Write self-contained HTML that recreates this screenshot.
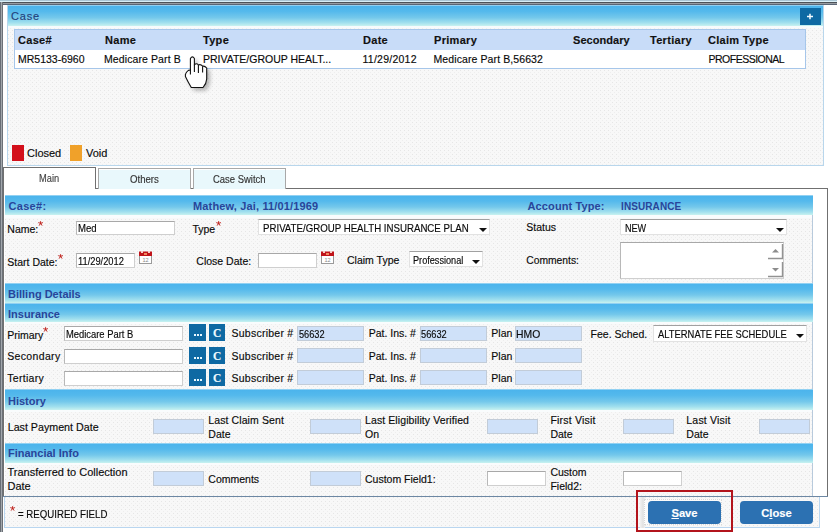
<!DOCTYPE html>
<html><head><meta charset="utf-8">
<style>
*{margin:0;padding:0;box-sizing:border-box}
html,body{width:837px;height:532px;overflow:hidden;background:#fff;font-family:"Liberation Sans",sans-serif;font-size:11px;color:#0a0a0a}
.a{position:absolute}
.t{position:absolute;white-space:nowrap;line-height:1;-webkit-text-stroke:0.15px currentColor}
.hb{position:absolute;background:linear-gradient(#c4e6f6 0px,#4cb4ec 1.2px,#54b9ec 30%,#74c8eb 60%,#a2e0ee 85%,#c8f2f0 100%)}
.ht{position:absolute;white-space:nowrap;line-height:1;font-weight:bold;color:#28459a;font-size:11px;letter-spacing:0px}
.inp{position:absolute;background:#fff;border:1px solid #cfcfcf;border-top-color:#a8a8a8;border-left-color:#b8b8b8}
.sel{position:absolute;background:#fff;border:1px solid #e2e2e2;border-top-color:#a0a0a0}
.blu{position:absolute;background:#cfe1f9;border:1px solid #c2ccd8}
.btn{position:absolute;background:#0e69a3;color:#fff;font-weight:bold;text-align:center;line-height:1}
.body{position:absolute;background-color:#f8f8f8;background-image:conic-gradient(at 1px 1px,rgba(0,0,0,0) 75%,#e6e6e6 0),conic-gradient(at 1px 1px,rgba(0,0,0,0) 75%,#eeeeee 0);background-size:4px 4px,4px 4px;background-position:0 0,2px 2px;box-shadow:inset -1px 0 #b8cadc}
.tex{background-color:#f8f8f8;background-image:conic-gradient(at 1px 1px,rgba(0,0,0,0) 75%,#e6e6e6 0),conic-gradient(at 1px 1px,rgba(0,0,0,0) 75%,#eeeeee 0);background-size:4px 4px,4px 4px;background-position:0 0,2px 2px}
.arr{position:absolute;width:0;height:0;border-left:4px solid transparent;border-right:4px solid transparent;border-top:4px solid #111}
</style></head><body>
<div class="a" style="left:0px;top:0px;width:837px;height:1px;background:#aac6d6"></div>
<div class="a" style="left:0px;top:1px;width:837px;height:1px;background:#d8eef6"></div>
<div class="a" style="left:0px;top:2px;width:837px;height:1px;background:#4c5258"></div>
<div class="a" style="left:0px;top:3px;width:837px;height:1px;background:#979ca2"></div>
<div class="a" style="left:0px;top:4px;width:837px;height:1px;background:#5a6676"></div>
<div class="a" style="left:0px;top:2px;width:1px;height:530px;background:#686e76"></div>
<div class="a" style="left:1px;top:2px;width:1px;height:530px;background:#a2a7ac"></div>
<div class="a" style="left:2px;top:2px;width:1px;height:530px;background:#6c7178"></div>
<div class="a tex" style="left:7px;top:5px;width:817px;height:161px;border:1px solid #b8d6ec"></div>
<div class="hb" style="left:8px;top:5px;width:815px;height:21px"></div>
<div class="a" style="left:8px;top:26px;width:815px;height:2px;background:#f6fbfd"></div>
<div class="t" style="left:11px;top:11px;font-size:11px;letter-spacing:0.8px;color:#22407c">Case</div>
<div class="btn" style="left:800px;top:8px;width:21px;height:17px"></div>
<svg class="a" style="left:806px;top:12px" width="9" height="9" viewBox="0 0 9 9"><path d="M4 1.8V7.2M1 4.5H7" stroke="#f4fbff" stroke-width="1.5"/></svg>
<div class="a" style="left:14px;top:29px;width:792px;height:40px;border:1px solid #a6c6ea;background:#fff"></div>
<div class="a" style="left:15px;top:30px;width:790px;height:20px;background:#c8dcf8"></div>
<div class="t" style="left:18px;top:35px;font-size:11px;letter-spacing:0.3px;font-weight:bold;color:#111">Case#</div>
<div class="t" style="left:105px;top:35px;font-size:11px;letter-spacing:0.3px;font-weight:bold;color:#111">Name</div>
<div class="t" style="left:203px;top:35px;font-size:11px;letter-spacing:0.3px;font-weight:bold;color:#111">Type</div>
<div class="t" style="left:363px;top:35px;font-size:11px;letter-spacing:0.3px;font-weight:bold;color:#111">Date</div>
<div class="t" style="left:434px;top:35px;font-size:11px;letter-spacing:0.3px;font-weight:bold;color:#111">Primary</div>
<div class="t" style="left:573px;top:35px;font-size:11px;letter-spacing:0.05px;font-weight:bold;color:#111">Secondary</div>
<div class="t" style="left:650px;top:35px;font-size:11px;letter-spacing:0.3px;font-weight:bold;color:#111">Tertiary</div>
<div class="t" style="left:708px;top:35px;font-size:11px;letter-spacing:0.3px;font-weight:bold;color:#111">Claim Type</div>
<div class="t" style="left:18px;top:54px;font-size:10.5px;letter-spacing:0px;">MR5133-6960</div>
<div class="t" style="left:104px;top:54px;font-size:10.5px;letter-spacing:0.1px;">Medicare Part B</div>
<div class="t" style="left:203px;top:54px;font-size:10.5px;letter-spacing:0px;">PRIVATE/GROUP HEALT...</div>
<div class="t" style="left:362.5px;top:54px;font-size:10.5px;letter-spacing:0.25px;">11/29/2012</div>
<div class="t" style="left:433.5px;top:54px;font-size:10.5px;letter-spacing:0.1px;">Medicare Part B,56632</div>
<div class="t" style="left:708.5px;top:54px;font-size:10.5px;letter-spacing:-0.5px;">PROFESSIONAL</div>
<div class="a" style="left:12px;top:145px;width:12px;height:16px;background:#d3101b"></div>
<div class="t" style="left:27px;top:148px;font-size:11px;letter-spacing:0px;">Closed</div>
<div class="a" style="left:70px;top:145px;width:12px;height:16px;background:#f0a12a"></div>
<div class="t" style="left:86px;top:148px;font-size:11px;letter-spacing:0px;">Void</div>
<div class="a" style="left:3px;top:188px;width:825px;height:309px;border:1px solid #707070;background:#fff"></div>
<div class="a" style="left:3px;top:167px;width:93px;height:22px;border:1px solid #707070;border-bottom:none;background:#fff"></div>
<div class="t" style="left:38.79px;top:174px;font-size:10.2px;transform:scaleX(0.91);transform-origin:0 0;color:#444">Main</div>
<div class="a" style="left:98px;top:168px;width:93px;height:21px;border:1px solid #a8a8a8;border-bottom:none;background:#e9f8fc;box-shadow:inset 0 1px 0 #fff"></div>
<div class="t" style="left:129.56px;top:175px;font-size:10.2px;transform:scaleX(0.945);transform-origin:0 0;color:#333">Others</div>
<div class="a" style="left:193px;top:168px;width:93px;height:21px;border:1px solid #a8a8a8;border-bottom:none;background:#e9f8fc;box-shadow:inset 0 1px 0 #fff"></div>
<div class="t" style="left:212.77px;top:175px;font-size:10.2px;transform:scaleX(0.927);transform-origin:0 0;color:#333">Case Switch</div>
<div class="hb" style="left:5px;top:195px;width:808px;height:20px"></div>
<div class="body" style="left:5px;top:215px;width:808px;height:68px"></div>
<div class="a" style="left:5px;top:215px;width:807px;height:3px;background:#f9fcfd"></div>
<div class="ht" style="left:8.5px;top:201px;letter-spacing:0.3px">Case#:</div>
<div class="ht" style="left:193px;top:201px;letter-spacing:0.15px">Mathew, Jai, 11/01/1969</div>
<div class="ht" style="left:527.5px;top:201px;letter-spacing:0.12px">Account Type:</div>
<div class="ht" style="left:621px;top:202px;font-size:10px;letter-spacing:0.1px">INSURANCE</div>
<div class="t" style="left:7.3px;top:224px;font-size:10.5px;letter-spacing:0px;">Name:</div>
<svg class="a" style="left:37.5px;top:221px" width="6" height="6" viewBox="0 0 6 6"><path d="M2.6 2.4L2.6 0.2M2.6 2.4L0.3 1.6M2.6 2.4L4.9 1.6M2.6 2.4L1.1 4.6M2.6 2.4L4.1 4.6" stroke="#c0221c" stroke-width="1"/></svg>
<div class="inp" style="left:76px;top:221px;width:99px;height:14px"></div>
<div class="t" style="left:77.86px;top:224px;font-size:10.2px;transform:scaleX(0.939);transform-origin:0 0;">Med</div>
<div class="t" style="left:192.4px;top:224px;font-size:10.5px;letter-spacing:0px;">Type</div>
<svg class="a" style="left:216px;top:221px" width="6" height="6" viewBox="0 0 6 6"><path d="M2.6 2.4L2.6 0.2M2.6 2.4L0.3 1.6M2.6 2.4L4.9 1.6M2.6 2.4L1.1 4.6M2.6 2.4L4.1 4.6" stroke="#c0221c" stroke-width="1"/></svg>
<div class="sel" style="left:258px;top:219px;width:232px;height:16px"></div>
<div class="t" style="left:263.05px;top:224px;font-size:10.2px;transform:scaleX(0.95);transform-origin:0 0;">PRIVATE/GROUP HEALTH INSURANCE PLAN</div>
<div class="arr" style="left:479px;top:228px"></div>
<div class="t" style="left:526.3px;top:221.5px;font-size:10.5px;letter-spacing:0px;">Status</div>
<div class="sel" style="left:620px;top:219px;width:167px;height:16px"></div>
<div class="t" style="left:624.61px;top:224px;font-size:10.2px;transform:scaleX(0.891);transform-origin:0 0;">NEW</div>
<div class="arr" style="left:776px;top:228px"></div>
<div class="t" style="left:7.3px;top:257px;font-size:10.5px;letter-spacing:0px;">Start Date:</div>
<svg class="a" style="left:57.5px;top:254px" width="6" height="6" viewBox="0 0 6 6"><path d="M2.6 2.4L2.6 0.2M2.6 2.4L0.3 1.6M2.6 2.4L4.9 1.6M2.6 2.4L1.1 4.6M2.6 2.4L4.1 4.6" stroke="#c0221c" stroke-width="1"/></svg>
<div class="inp" style="left:76px;top:253px;width:59px;height:15px"></div>
<div class="t" style="left:77.59px;top:257px;font-size:10.2px;transform:scaleX(0.914);transform-origin:0 0;">11/29/2012</div>
<svg class="a" style="left:139px;top:251px" width="13" height="13" viewBox="0 0 13 13">
<rect x="0.5" y="3.5" width="12" height="9" fill="#fff" stroke="#9a9a9a"/>
<rect x="0" y="0.5" width="13" height="4.5" fill="#c0141a"/>
<rect x="2" y="0" width="2" height="2" fill="#f6d0c8"/><rect x="9" y="0" width="2" height="2" fill="#f6d0c8"/>
<rect x="5" y="2" width="3" height="2" fill="#f08a60"/>
<text x="6.5" y="10.8" font-size="5.5" text-anchor="middle" fill="#888" font-family="Liberation Sans">12</text>
</svg>
<div class="t" style="left:196.3px;top:255.5px;font-size:10.5px;letter-spacing:0px;">Close Date:</div>
<div class="inp" style="left:258px;top:253px;width:59px;height:15px"></div>
<svg class="a" style="left:321px;top:251px" width="13" height="13" viewBox="0 0 13 13">
<rect x="0.5" y="3.5" width="12" height="9" fill="#fff" stroke="#9a9a9a"/>
<rect x="0" y="0.5" width="13" height="4.5" fill="#c0141a"/>
<rect x="2" y="0" width="2" height="2" fill="#f6d0c8"/><rect x="9" y="0" width="2" height="2" fill="#f6d0c8"/>
<rect x="5" y="2" width="3" height="2" fill="#f08a60"/>
<text x="6.5" y="10.8" font-size="5.5" text-anchor="middle" fill="#888" font-family="Liberation Sans">12</text>
</svg>
<div class="t" style="left:347px;top:254.5px;font-size:10.5px;letter-spacing:0px;">Claim Type</div>
<div class="sel" style="left:409px;top:251px;width:74px;height:16px"></div>
<div class="t" style="left:412.8px;top:256px;font-size:10.2px;transform:scaleX(0.896);transform-origin:0 0;">Professional</div>
<div class="arr" style="left:472px;top:260px"></div>
<div class="t" style="left:526.3px;top:255.5px;font-size:10.3px;letter-spacing:0px;">Comments:</div>
<div class="inp" style="left:620px;top:242px;width:164px;height:37px"></div>
<svg class="a" style="left:767px;top:243px" width="17" height="35" viewBox="0 0 17 35">
<path d="M1 15.5H15.5V1" fill="none" stroke="#929292" stroke-width="1.4"/>
<path d="M5 9.5L8.5 6L12 9.5Z" fill="#8c8c8c"/>
<path d="M1 33.5H15.5V19" fill="none" stroke="#929292" stroke-width="1.4"/>
<path d="M5 25L8.5 28.5L12 25Z" fill="#8c8c8c"/>
</svg>
<div class="hb" style="left:5px;top:283px;width:808px;height:20px"></div>
<div class="ht" style="left:8px;top:289px">Billing Details</div>
<div class="hb" style="left:5px;top:303px;width:808px;height:19px"></div>
<div class="ht" style="left:8px;top:308.5px">Insurance</div>
<div class="body" style="left:5px;top:322px;width:808px;height:67px"></div>
<div class="a" style="left:5px;top:322px;width:807px;height:2px;background:#f9fcfd"></div>
<div class="t" style="left:7.2px;top:330px;font-size:10.5px;letter-spacing:0px;">Primary</div>
<svg class="a" style="left:43px;top:327px" width="6" height="6" viewBox="0 0 6 6"><path d="M2.6 2.4L2.6 0.2M2.6 2.4L0.3 1.6M2.6 2.4L4.9 1.6M2.6 2.4L1.1 4.6M2.6 2.4L4.1 4.6" stroke="#c0221c" stroke-width="1"/></svg>
<div class="inp" style="left:64px;top:326px;width:119px;height:15px"></div>
<div class="t" style="left:65.58px;top:330px;font-size:10.2px;transform:scaleX(0.921);transform-origin:0 0;">Medicare Part B</div>
<div class="btn" style="left:189px;top:324px;width:17px;height:17px"></div>
<div class="a" style="left:194px;top:334px;width:2px;height:2px;background:#e8f8ff;box-shadow:3px 0 #e8f8ff,6px 0 #e8f8ff"></div>
<div class="btn" style="left:209px;top:324px;width:16px;height:17px"></div>
<div class="t" style="left:213px;top:328px;font-family:'Liberation Serif',serif;font-size:11.5px;font-weight:bold;color:#eefaff">C</div>
<div class="t" style="left:231.5px;top:328px;font-size:10.5px;letter-spacing:0.25px;">Subscriber #</div>
<div class="blu" style="left:297px;top:326px;width:67px;height:15px"></div>
<div class="t" style="left:298.7px;top:330px;font-size:10.2px;transform:scaleX(0.904);transform-origin:0 0;">56632</div>
<div class="t" style="left:368.7px;top:328px;font-size:10.5px;letter-spacing:0px;">Pat. Ins. #</div>
<div class="blu" style="left:420px;top:326px;width:67px;height:15px"></div>
<div class="t" style="left:421.09px;top:330px;font-size:10.2px;transform:scaleX(0.907);transform-origin:0 0;">56632</div>
<div class="t" style="left:491.3px;top:328px;font-size:10.5px;letter-spacing:0px;">Plan</div>
<div class="blu" style="left:515px;top:326px;width:67px;height:15px"></div>
<div class="t" style="left:516.38px;top:330px;font-size:10.2px;transform:scaleX(1.018);transform-origin:0 0;">HMO</div>
<div class="t" style="left:7.2px;top:351px;font-size:10.5px;letter-spacing:0.35px;">Secondary</div>
<div class="inp" style="left:64px;top:349px;width:119px;height:15px"></div>
<div class="btn" style="left:189px;top:347px;width:17px;height:17px"></div>
<div class="a" style="left:194px;top:357px;width:2px;height:2px;background:#e8f8ff;box-shadow:3px 0 #e8f8ff,6px 0 #e8f8ff"></div>
<div class="btn" style="left:209px;top:347px;width:16px;height:17px"></div>
<div class="t" style="left:213px;top:351px;font-family:'Liberation Serif',serif;font-size:11.5px;font-weight:bold;color:#eefaff">C</div>
<div class="t" style="left:231.5px;top:351px;font-size:10.5px;letter-spacing:0.25px;">Subscriber #</div>
<div class="blu" style="left:297px;top:348px;width:67px;height:15px"></div>
<div class="t" style="left:368.7px;top:351px;font-size:10.5px;letter-spacing:0px;">Pat. Ins. #</div>
<div class="blu" style="left:420px;top:348px;width:67px;height:15px"></div>
<div class="t" style="left:491.3px;top:351px;font-size:10.5px;letter-spacing:0px;">Plan</div>
<div class="blu" style="left:515px;top:348px;width:67px;height:15px"></div>
<div class="t" style="left:7.2px;top:373px;font-size:10.5px;letter-spacing:0.3px;">Tertiary</div>
<div class="inp" style="left:64px;top:371px;width:119px;height:15px"></div>
<div class="btn" style="left:189px;top:369px;width:17px;height:17px"></div>
<div class="a" style="left:194px;top:379px;width:2px;height:2px;background:#e8f8ff;box-shadow:3px 0 #e8f8ff,6px 0 #e8f8ff"></div>
<div class="btn" style="left:209px;top:369px;width:16px;height:17px"></div>
<div class="t" style="left:213px;top:373px;font-family:'Liberation Serif',serif;font-size:11.5px;font-weight:bold;color:#eefaff">C</div>
<div class="t" style="left:231.5px;top:373px;font-size:10.5px;letter-spacing:0.25px;">Subscriber #</div>
<div class="blu" style="left:297px;top:370px;width:67px;height:15px"></div>
<div class="t" style="left:368.7px;top:373px;font-size:10.5px;letter-spacing:0px;">Pat. Ins. #</div>
<div class="blu" style="left:420px;top:370px;width:67px;height:15px"></div>
<div class="t" style="left:491.3px;top:373px;font-size:10.5px;letter-spacing:0px;">Plan</div>
<div class="blu" style="left:515px;top:370px;width:67px;height:15px"></div>
<div class="t" style="left:590.6px;top:329px;font-size:10.5px;letter-spacing:0px;">Fee. Sched.</div>
<div class="sel" style="left:653px;top:325px;width:154px;height:17px"></div>
<div class="t" style="left:658.2px;top:330px;font-size:10.2px;transform:scaleX(0.923);transform-origin:0 0;">ALTERNATE FEE SCHEDULE</div>
<div class="arr" style="left:796px;top:334px"></div>
<div class="hb" style="left:5px;top:389px;width:808px;height:21px"></div>
<div class="ht" style="left:8px;top:396px">History</div>
<div class="body" style="left:5px;top:410px;width:808px;height:33px"></div>
<div class="a" style="left:5px;top:410px;width:807px;height:2px;background:#f9fcfd"></div>
<div class="t" style="left:7.7px;top:421.5px;font-size:10.7px;letter-spacing:0px;">Last Payment Date</div>
<div class="blu" style="left:153px;top:419px;width:51px;height:15px"></div>
<div class="t" style="left:208.3px;top:414.5px;font-size:10.5px;letter-spacing:0.1px;">Last Claim Sent</div>
<div class="t" style="left:208.3px;top:429px;font-size:10.5px;letter-spacing:0px;">Date</div>
<div class="blu" style="left:310px;top:419px;width:51px;height:15px"></div>
<div class="t" style="left:365px;top:414.5px;font-size:10.5px;letter-spacing:0.1px;">Last Eligibility Verified</div>
<div class="t" style="left:365px;top:429px;font-size:10.5px;letter-spacing:0px;">On</div>
<div class="blu" style="left:487px;top:419px;width:51px;height:15px"></div>
<div class="t" style="left:550.4px;top:414.5px;font-size:10.5px;letter-spacing:0.2px;">First Visit</div>
<div class="t" style="left:550.4px;top:429px;font-size:10.5px;letter-spacing:0px;">Date</div>
<div class="blu" style="left:623px;top:419px;width:51px;height:15px"></div>
<div class="t" style="left:686.3px;top:414.5px;font-size:10.5px;letter-spacing:0.2px;">Last Visit</div>
<div class="t" style="left:686.3px;top:429px;font-size:10.5px;letter-spacing:0px;">Date</div>
<div class="blu" style="left:759px;top:419px;width:51px;height:15px"></div>
<div class="hb" style="left:5px;top:443px;width:808px;height:20px"></div>
<div class="ht" style="left:8px;top:448px">Financial Info</div>
<div class="body" style="left:5px;top:463px;width:808px;height:33px"></div>
<div class="a" style="left:5px;top:463px;width:807px;height:2px;background:#f9fcfd"></div>
<div class="t" style="left:7.5px;top:467px;font-size:11px;letter-spacing:0px;">Transferred to Collection</div>
<div class="t" style="left:7.5px;top:481px;font-size:11px;letter-spacing:0px;">Date</div>
<div class="blu" style="left:153px;top:471px;width:51px;height:15px"></div>
<div class="t" style="left:208.3px;top:473.5px;font-size:10.5px;letter-spacing:0px;">Comments</div>
<div class="blu" style="left:310px;top:471px;width:51px;height:15px"></div>
<div class="t" style="left:365px;top:473.5px;font-size:10.5px;letter-spacing:0px;">Custom Field1:</div>
<div class="inp" style="left:487px;top:471px;width:59px;height:15px"></div>
<div class="t" style="left:550.4px;top:467px;font-size:10.5px;letter-spacing:0px;">Custom</div>
<div class="t" style="left:550.4px;top:481px;font-size:10.5px;letter-spacing:0px;">Field2:</div>
<div class="inp" style="left:623px;top:471px;width:59px;height:15px"></div>
<div class="a" style="left:3px;top:496px;width:825px;height:1px;background:#6d88a4"></div>
<div class="a" style="left:4px;top:497px;width:816px;height:1px;background:#dce8f2"></div>
<div class="a tex" style="left:4px;top:497px;width:816px;height:31px;border:1px solid #b9d6f0;border-top:none"></div>
<svg class="a" style="left:9.5px;top:506px" width="6" height="6" viewBox="0 0 6 6"><path d="M2.6 2.4L2.6 0.2M2.6 2.4L0.3 1.6M2.6 2.4L4.9 1.6M2.6 2.4L1.1 4.6M2.6 2.4L4.1 4.6" stroke="#c0221c" stroke-width="1"/></svg>
<div class="t" style="left:17.65px;top:510px;font-size:10.2px;transform:scaleX(0.948);transform-origin:0 0;">= REQUIRED FIELD</div>
<div class="a" style="left:640px;top:497px;width:5px;height:31px;background:linear-gradient(90deg,#f2f2f2,#e2e2e2 60%,#f0f0f0)"></div>
<div class="a" style="left:644px;top:499px;width:78px;height:26px;background:#fbfbfb;border:1px dotted #d8d8d8"></div>
<div class="a" style="left:648px;top:501px;width:73px;height:23px;border-radius:4px;background:#2c71b2"></div>
<div class="t" style="left:648px;top:508px;width:73px;text-align:center;color:#fff;font-weight:bold;font-size:11.2px;letter-spacing:0px"><span style="text-decoration:underline">S</span>ave</div>
<div class="a" style="left:740px;top:501px;width:73px;height:23px;border-radius:4px;background:#2c71b2"></div>
<div class="t" style="left:740px;top:508px;width:73px;text-align:center;color:#fff;font-weight:bold;font-size:11.2px;letter-spacing:0px">C<span style="text-decoration:underline">l</span>ose</div>
<div class="a" style="left:636px;top:490px;width:97px;height:42px;border:2.5px solid #b3141c"></div>
<svg class="a" style="left:182px;top:54px" width="32" height="40" viewBox="0 0 32 40">
<defs><filter id="sh" x="-30%" y="-30%" width="160%" height="160%"><feGaussianBlur stdDeviation="1.9"/></filter></defs>
<path d="M8.4 16V4.5Q10.4 1.2 12.4 4.5V11Q14.4 8.6 16.4 11Q18.5 9.8 20.6 12.2Q22.6 11.6 24.7 14V25Q24.5 29.5 21 33.5H9.3Q6 28 3.4 22.5Q3 19 6.4 16.4Z" fill="#444" opacity="0.4" filter="url(#sh)" transform="translate(3,3)"/>
<path d="M8.4 16V4.5Q10.4 1.2 12.4 4.5V11Q14.4 8.6 16.4 11Q18.5 9.8 20.6 12.2Q22.6 11.6 24.7 14V25Q24.5 29.5 21 33.5H9.3Q6 28 3.4 22.5Q3 19 6.4 16.4Z" fill="#fff" stroke="#111" stroke-width="1.1" stroke-linejoin="round"/>
<path d="M8.4 15V20.5M12.4 10.5V18M16.4 11V19M20.6 12.2V18.5" stroke="#111" stroke-width="1.1" fill="none"/>
</svg>
</body></html>
